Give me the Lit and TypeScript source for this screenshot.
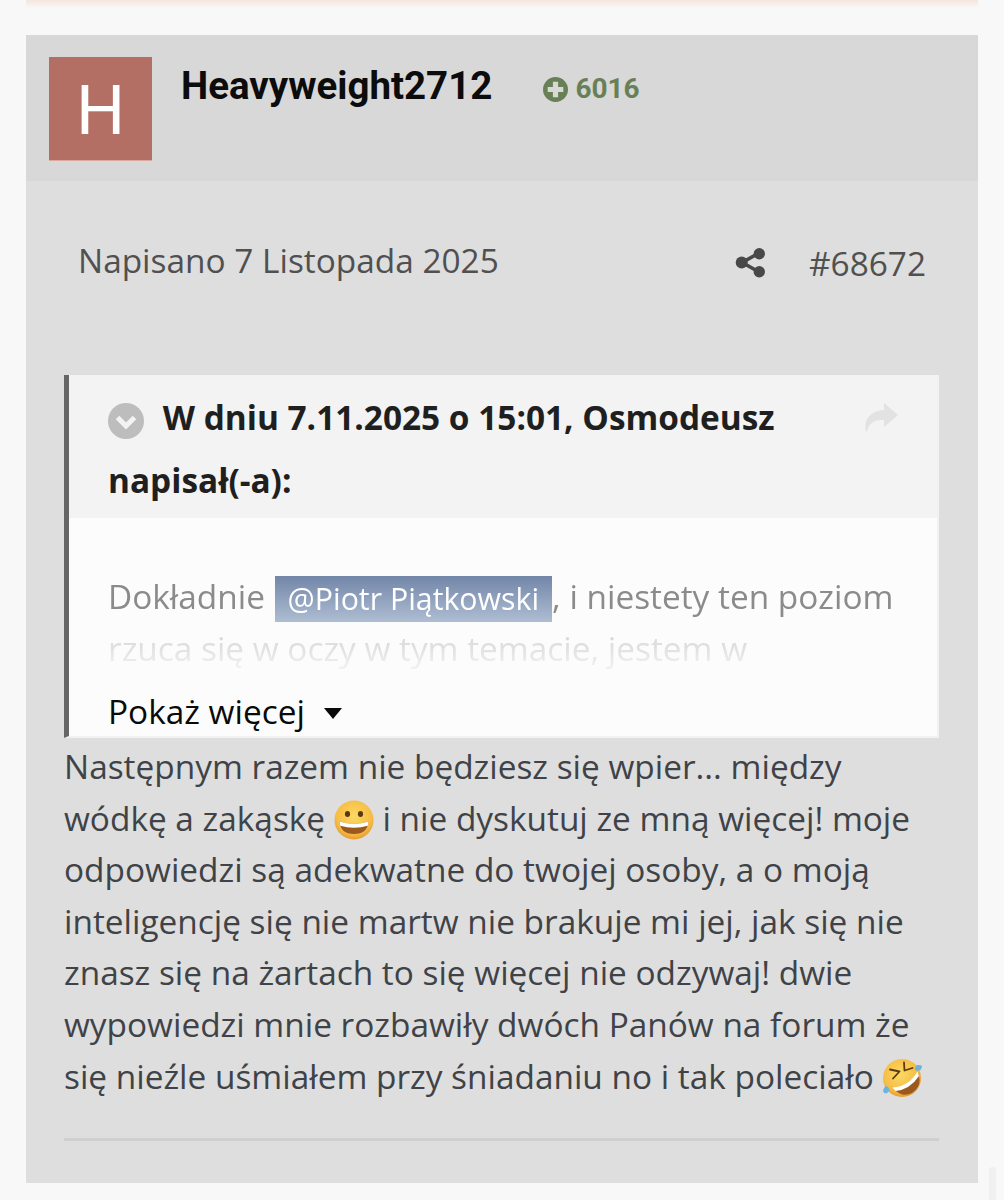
import { css, html, LitElement, svg } from "lit";
import { customElement } from "lit/decorators.js";

const grin = svg`
  <defs>
    <radialGradient id="face" cx="50%" cy="40%" r="60%">
      <stop offset="0%" stop-color="#fbd964" />
      <stop offset="75%" stop-color="#f6bd45" />
      <stop offset="100%" stop-color="#e79a2f" />
    </radialGradient>
  </defs>
  <circle cx="20" cy="20" r="19.5" fill="url(#face)" />
  <ellipse cx="13.5" cy="14" rx="2.6" ry="3" fill="#5b3a12" />
  <ellipse cx="26.5" cy="14" rx="2.6" ry="3" fill="#5b3a12" />
  <path d="M5.5 21.5 Q20 26 34.500 21.500 Q33.500 34 20 34 Q6.500 34 5.500 21.500Z" fill="#9a5a1e" />
  <path d="M5.500 21.500 Q20 26 34.500 21.500 L33.800 25.800 Q20 29.500 6.200 25.800Z" fill="#fff" />
`;

const rofl = svg`
  <defs>
    <radialGradient id="face2" cx="45%" cy="40%" r="60%">
      <stop offset="0%" stop-color="#fbd964" />
      <stop offset="75%" stop-color="#f6bd45" />
      <stop offset="100%" stop-color="#e79a2f" />
    </radialGradient>
  </defs>
  <circle cx="20" cy="20" r="19" fill="url(#face2)" />
  <path d="M12 31 Q27 30 36 15 Q41 28 30 35 Q20 40 12 31Z" fill="#9a5a1e" />
  <path d="M10.500 29.500 Q27 28.500 35.500 13.500 L37 18 Q28 31.500 13.500 33Z" fill="#fff" />
  <path d="M8 11.500 L17.500 13.500 L11 20.500" fill="none" stroke="#5b3a12" stroke-width="1.800" stroke-linecap="round" stroke-linejoin="round" />
  <path d="M22 4.500 L22.500 12.500 L30.500 10" fill="none" stroke="#5b3a12" stroke-width="1.800" stroke-linecap="round" stroke-linejoin="round" />
  <path d="M38.500 12 Q35 13.500 33 12 Q32.500 8.500 35 7 Q38 6.500 40 8 Q40 10.500 38.500 12Z" fill="#6db3de" />
  <path d="M3.500 28 Q6.500 28.500 7.500 31 Q7 34.500 4 35.500 Q1.500 35 1 33 Q1.500 30 3.500 28Z" fill="#6db3de" />
`;

@customElement("app-root")
export class AppRoot extends LitElement {
  static styles = css`
    :host {
      display: block;
      height: 1200px;
      overflow: hidden;
      background: #f8f8f8;
      font-family: "Open Sans", sans-serif;
    }

    .page {
      display: flex;
      flex-direction: column;
      height: 1200px;
      padding-right: 26px;
      padding-left: 26px;
      box-sizing: border-box;
    }

    .prev-card {
      flex: none;
      height: 8px;
      margin: 0 0 27px;
      background: linear-gradient(to bottom, #f6e6dc, #f8f8f8);
    }

    .card {
      flex: none;
      height: 1148px;
      background: #dedede;
    }

    .card-head {
      display: flex;
      align-items: flex-start;
      height: 146px;
      padding: 22px 0 0 23px;
      box-sizing: border-box;
      background: #d8d8d8;
    }

    .avatar {
      display: flex;
      align-items: center;
      justify-content: center;
      width: 103px;
      height: 103px;
      padding-top: 3px;
      box-sizing: border-box;
      background: #b46f64;
      box-shadow: 0 1px 0 #dba99f;
      color: #fff;
      font-family: "Roboto", sans-serif;
      font-size: 69px;
      line-height: 1;
      font-weight: 400;
    }

    .name {
      margin: 5px 0 0 29px;
      color: #0c0c0c;
      font-family: "Roboto", sans-serif;
      font-size: 38.500px;
      line-height: 48px;
      font-weight: 700;
    }

    .rep {
      display: flex;
      align-items: center;
      gap: 7px;
      margin: 17px 0 0 51px;
      color: #688055;
      font-family: "Roboto", sans-serif;
      font-size: 28px;
      line-height: 30px;
      font-weight: 700;
    }

    .rep svg {
      width: 25px;
      height: 25px;
    }

    .meta {
      display: flex;
      align-items: center;
      height: 164px;
      padding: 0 52px 0 52px;
      color: #505050;
      font-size: 33.400px;
    }

    .date {
      flex: 1;
      margin-top: -6px;
    }

    .share {
      width: 31px;
      height: 31px;
      margin: -2px 43px 0 0;
    }

    .post {
      margin: 30px 39px 0 38px;
      color: #3f4348;
      font-size: 33.400px;
      line-height: 51.600px;
    }

    .quote {
      margin: 0 0 3px;
      border-left: 5px solid #666;
      border-right: 2px solid #f2f2f2;
      border-bottom: 2px solid #f2f2f2;
      background: #fcfcfc;
    }

    .quote-head {
      position: relative;
      height: 143px;
      padding: 11px 40px 0 39px;
      box-sizing: border-box;
      background: #f3f3f3;
      color: #1f1f1f;
      font-size: 33.400px;
      line-height: 63px;
      font-weight: 700;
    }

    .toggle {
      display: inline-block;
      width: 36px;
      height: 36px;
      margin-right: 10px;
      vertical-align: -9px;
    }

    .go {
      position: absolute;
      top: 27px;
      right: 38px;
      width: 36px;
      height: 32px;
    }

    .quote-body {
      height: 218px;
      padding: 52px 40px 0 39px;
      box-sizing: border-box;
    }

    .quote-text {
      height: 106px;
      overflow: hidden;
      color: #8b8b8b;
      font-size: 33.400px;
      line-height: 52px;
      -webkit-mask-image: linear-gradient(to bottom, #000 49%, rgba(0, 0, 0, 0.38) 54%, rgba(0, 0, 0, 0.1) 92%);
      mask-image: linear-gradient(to bottom, #000 49%, rgba(0, 0, 0, 0.38) 54%, rgba(0, 0, 0, 0.1) 92%);
    }

    .mention {
      display: inline-block;
      height: 46px;
      margin-left: 1px;
      padding: 0 13px;
      background: linear-gradient(to bottom, #7286a8, #aebdd2);
      color: #fff;
      font-size: 30.300px;
      line-height: 46px;
      vertical-align: -1px;
    }

    .more {
      display: flex;
      align-items: center;
      height: 40px;
      margin-top: 16px;
      color: #0a0a0a;
      font-size: 33.400px;
      white-space: nowrap;
    }

    .caret {
      width: 18px;
      height: 11px;
      margin: 2px 0 0 19px;
    }

    .emoji {
      display: inline-block;
      width: 40px;
      height: 40px;
      vertical-align: -9px;
    }

    .rule {
      height: 3px;
      margin: 36px 39px 0 38px;
      background: #cfcfd2;
    }

    .scroll-hint {
      position: absolute;
      top: 1167px;
      left: 989px;
      width: 7px;
      height: 33px;
      border-radius: 4px 4px 0 0;
      background: #f0f0f0;
    }
  `;

  render() {
    return html`
      <div class="page">
        <div class="prev-card"></div>
        <article class="card">
          <header class="card-head">
            <div class="avatar">H</div>
            <div class="name">Heavyweight2712</div>
            <div class="rep">
              <svg viewBox="0 0 24 24">
                <circle cx="12" cy="12" r="12" fill="#688055" />
                <path d="M9.500 4.500h5v5h5v5h-5v5h-5v-5h-5v-5h5z" fill="#d8d8d8" />
              </svg>
              6016
            </div>
          </header>
          <div class="meta">
            <div class="date">Napisano 7 Listopada 2025</div>
            <svg class="share" viewBox="0 0 30 30">
              <path d="M22 6.500L7 15l15 8.500" fill="none" stroke="#484848" stroke-width="3.500" />
              <circle cx="23.500" cy="6.500" r="5.500" fill="#484848" />
              <circle cx="6.500" cy="15" r="5.800" fill="#484848" />
              <circle cx="23.500" cy="24" r="5.500" fill="#484848" />
            </svg>
            <div class="post-no">#68672</div>
          </div>
          <div class="post">
            <blockquote class="quote">
              <div class="quote-head">
                <svg class="toggle" viewBox="0 0 36 36">
                  <circle cx="18" cy="18" r="18" fill="#bdbdbd" />
                  <path d="M9.500 14.500L18 23l8.500-8.500" fill="none" stroke="#f3f3f3" stroke-width="5" />
                </svg>
                W dniu 7.11.2025 o 15:01, Osmodeusz napisał(-a):
                <svg class="go" viewBox="0 0 36 32">
                  <path
                    d="M21 1l14 12-14 12v-7C12 17.500 6 20 3.500 31 0 19 6 9 21 8z"
                    fill="#e2e2e2"
                  />
                </svg>
              </div>
              <div class="quote-body">
                <div class="quote-text">
                  Dokładnie <span class="mention">@Piotr Piątkowski</span>, i niestety ten poziom
                  rzuca się w oczy w tym temacie, jestem w
                </div>
                <div class="more">
                  Pokaż więcej
                  <svg class="caret" viewBox="0 0 18 11"><path d="M0 0h18L9 11z" fill="#0a0a0a" /></svg>
                </div>
              </div>
            </blockquote>
            Następnym razem nie będziesz się wpier... między wódkę a zakąskę
            <svg class="emoji" viewBox="0 0 40 40">${grin}</svg>
            i nie dyskutuj ze mną więcej! moje odpowiedzi są adekwatne do twojej osoby, a o moją
            inteligencję się nie martw nie brakuje mi jej, jak się nie znasz się na żartach to się
            więcej nie odzywaj! dwie wypowiedzi mnie rozbawiły dwóch Panów na forum że się nieźle
            uśmiałem przy śniadaniu no i tak poleciało
            <svg class="emoji" viewBox="0 0 40 40">${rofl}</svg>
          </div>
          <div class="rule"></div>
        </article>
      </div>
      <div class="scroll-hint"></div>
    `;
  }
}
